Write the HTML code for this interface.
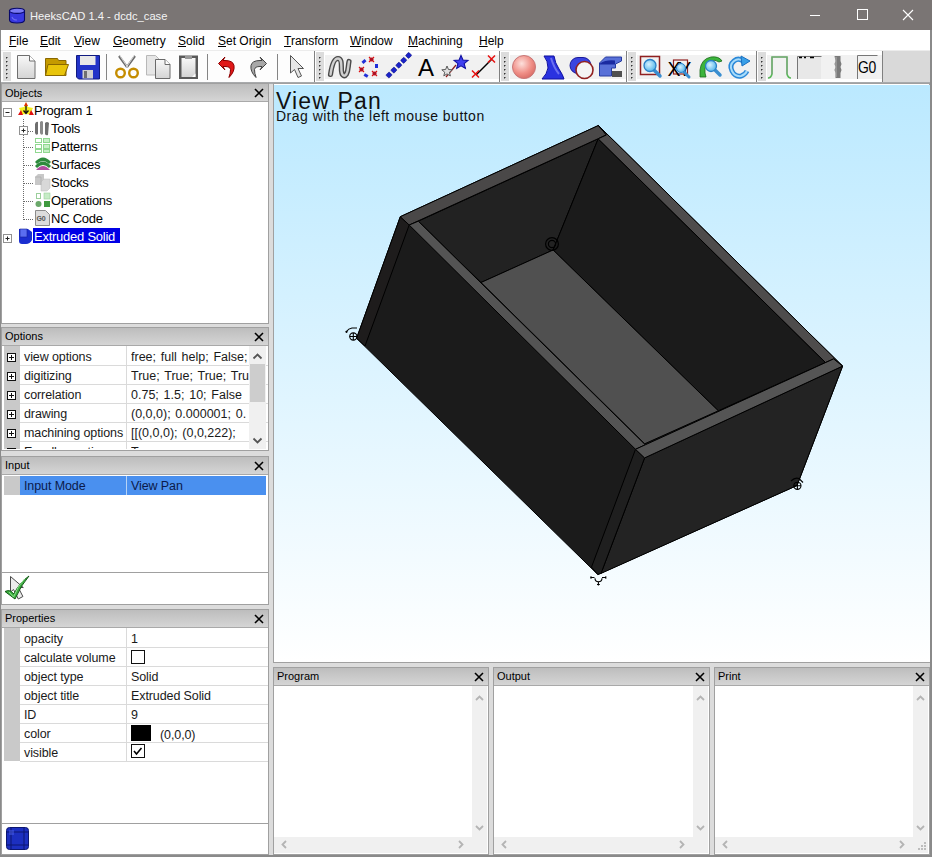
<!DOCTYPE html>
<html><head><meta charset="utf-8">
<style>
*{margin:0;padding:0;box-sizing:border-box}
html,body{width:932px;height:857px;overflow:hidden;background:#dcdcdc;font-family:"Liberation Sans",sans-serif;position:relative}
.a{position:absolute}
#title{left:0;top:0;width:932px;height:30px;background:#7a7574;color:#fff}
#menu{left:0;top:30px;width:932px;height:20px;background:#fff;font-size:12px;color:#000}
#menu span{position:absolute;top:4px;white-space:pre}
#menu u{text-decoration:underline;text-decoration-thickness:1px;text-underline-offset:0.5px}
.fr{position:absolute;border:1px solid #a0a0a0;background:#fff}
.hdr{position:absolute;height:18px;background:linear-gradient(#bdbdbd,#d5d5d5);border-bottom:1px solid #a9a9a9;font-size:11px;color:#000}
.hdr span{position:absolute;left:3px;top:2px}
.hdr.o span{top:3px}
.hx{position:absolute;right:4px;top:4px;width:10px;height:10px}
.grid{position:absolute;font-size:12.5px;letter-spacing:-0.1px;color:#1a1a1a;overflow:hidden;background:#fff}
.grid .g{position:absolute;left:2px;top:0;width:16px;background:#c9c9c9}
.grid .row{position:absolute;left:18px;height:19px;width:248px;border-bottom:1px solid #dadada}
.grid .row span{position:absolute;top:3px;white-space:pre}
.grid .c{position:absolute;top:0;width:1px;background:#dadada}
.pb{position:absolute;left:5px;width:9px;height:9px;border:1px solid #111;background:#fff}
.pb:before{content:"";position:absolute;left:1px;top:3px;width:5px;height:1px;background:#111}
.pb:after{content:"";position:absolute;left:3px;top:1px;width:1px;height:5px;background:#111}
</style></head><body>
<!-- title bar -->
<div id="title" class="a">
  <svg class="a" style="left:8px;top:6px" width="18" height="18" viewBox="0 0 18 18">
    <path d="M1.5 4.5v9.5q0 3 7.5 3q7.5 0 7.5-3v-9.5z" fill="#3838e0" stroke="#08086a" stroke-width="1.1"/>
    <ellipse cx="9" cy="4.8" rx="7.5" ry="2.6" fill="#7a7af4" stroke="#08086a" stroke-width="1.1"/>
    <path d="M4 11q1 3 5 3" stroke="#6a6af0" stroke-width="1.2" fill="none"/>
  </svg>
  <span class="a" style="left:30px;top:10px;font-size:11.2px;color:#f4f4f4">HeeksCAD 1.4 - dcdc_case</span>
  <svg class="a" style="left:700px;top:0" width="232" height="30">
    <path d="M110 15.5h10" stroke="#fff" stroke-width="1"/>
    <rect x="857.5" y="9.5" width="10" height="10" fill="none" stroke="#fff" stroke-width="1" transform="translate(-700 0)"/>
    <path d="M203 10l10 10M213 10l-10 10" stroke="#fff" stroke-width="1.1"/>
  </svg>
</div>
<div id="menu" class="a">
  <span style="left:9px"><u>F</u>ile</span>
  <span style="left:40px"><u>E</u>dit</span>
  <span style="left:74px"><u>V</u>iew</span>
  <span style="left:113px"><u>G</u>eometry</span>
  <span style="left:178px"><u>S</u>olid</span>
  <span style="left:218px"><u>S</u>et Origin</span>
  <span style="left:284px"><u>T</u>ransform</span>
  <span style="left:350px"><u>W</u>indow</span>
  <span style="left:408px"><u>M</u>achining</span>
  <span style="left:479px"><u>H</u>elp</span>
</div>
<!-- toolbar -->
<svg class="a" style="left:0;top:50px" width="932" height="34" viewBox="0 50 932 34">
 <defs>
  <linearGradient id="gdoc" x1="0" y1="0" x2="0" y2="1"><stop offset="0" stop-color="#f8f8f8"/><stop offset="1" stop-color="#d4d4d4"/></linearGradient>
  <radialGradient id="gsph" cx="0.4" cy="0.35" r="0.7"><stop offset="0" stop-color="#fde0dc"/><stop offset="0.6" stop-color="#f09088"/><stop offset="1" stop-color="#d86a64"/></radialGradient>
  <radialGradient id="gmag" cx="0.4" cy="0.4" r="0.6"><stop offset="0" stop-color="#d8f2ff"/><stop offset="1" stop-color="#58b8ec"/></radialGradient>
 </defs>
 <rect x="0" y="50" width="932" height="34" fill="#d9d9d9"/>
 <rect x="1" y="50" width="930" height="1" fill="#ececec"/>
 <rect x="1" y="51" width="313" height="31" fill="#fdfdfd"/>
 <rect x="315" y="51" width="185" height="31" fill="#fff"/><rect x="325" y="55" width="175" height="24" fill="#f1f1f1"/>
 <rect x="500" y="51" width="127" height="31" fill="#fff"/><rect x="510" y="55" width="117" height="24" fill="#f1f1f1"/>
 <rect x="627" y="51" width="130" height="31" fill="#fff"/><rect x="637" y="55" width="120" height="24" fill="#f1f1f1"/>
 <rect x="757" y="51" width="126" height="31" fill="#fff"/><rect x="767" y="55" width="116" height="24" fill="#f1f1f1"/>
 <g fill="#808080"><rect x="314" y="51" width="1" height="32"/><rect x="499" y="51" width="1" height="32"/><rect x="626" y="51" width="1" height="32"/><rect x="756" y="51" width="1" height="32"/><rect x="882" y="51" width="1" height="32"/></g>
 <rect x="0" y="82" width="932" height="2" fill="#a8aaac"/>
 <!-- grippers -->
 <g fill="#dcdcdc"><rect x="3" y="52" width="8" height="29"/><rect x="316" y="52" width="8" height="29"/><rect x="501" y="52" width="8" height="29"/><rect x="628" y="52" width="8" height="29"/><rect x="758" y="52" width="8" height="29"/></g>
 <g fill="#333">
  <path id="gd" d="M6 57h2l-2 2zM6 61h2l-2 2zM6 65h2l-2 2zM6 69h2l-2 2zM6 73h2l-2 2zM6 77h2l-2 2z"/>
  <use href="#gd" x="313"/><use href="#gd" x="498"/><use href="#gd" x="625"/><use href="#gd" x="755"/>
 </g>
 <!-- separators -->
 <g fill="#858585"><rect x="106" y="54" width="1" height="26"/><rect x="207" y="54" width="1" height="26"/><rect x="277" y="54" width="1" height="26"/></g>
 <!-- new doc -->
 <path d="M17.5 55.5h12l5.5 5.5v17.5h-17.5z" fill="url(#gdoc)" stroke="#6e6e6e"/><path d="M29.5 55.5v5.5h5.5" fill="#fff" stroke="#6e6e6e"/>
 <!-- folder -->
 <path d="M45.5 58.5h12l1 2h7.5v15h-20.5z" fill="#c49a00" stroke="#8a6800"/>
 <path d="M48 64.5h20.5l-4 11h-19z" fill="#e8c40a" stroke="#8a6800"/>
 <!-- floppy -->
 <path d="M76.5 55.5h23v23.5h-21l-2-2z" fill="#2233c8" stroke="#101a80"/>
 <rect x="80" y="56" width="15.5" height="9" fill="#e8e8e8"/>
 <rect x="82.5" y="70" width="10.5" height="8.5" fill="#d0d0d0"/><rect x="84" y="71" width="3" height="7" fill="#707070"/>
 <!-- scissors -->
 <path d="M119 56l8 11M135 56l-8 11" stroke="#6a6a6a" stroke-width="2.2" fill="none"/>
 <path d="M120 56l7.5 11M134 56l-7.5 11" stroke="#f0f0f0" stroke-width="0.8" fill="none"/>
 <circle cx="120.5" cy="73" r="4.3" fill="none" stroke="#c48c00" stroke-width="2.4"/><circle cx="133.5" cy="73" r="4.3" fill="none" stroke="#c48c00" stroke-width="2.4"/>
 <!-- copy -->
 <path d="M146.5 55.5h9l4 4v15.5h-13z" fill="#e6e6e6" stroke="#b8b8b8"/>
 <path d="M155.5 59.5h9.5l5 5v14h-14.5z" fill="url(#gdoc)" stroke="#6a6a6a"/><path d="M165 59.5v5h5" fill="#fff" stroke="#6a6a6a"/>
 <!-- paste -->
 <rect x="179" y="55.5" width="19" height="23.5" fill="#5a5a5a"/><rect x="181.5" y="58" width="14" height="19" fill="url(#gdoc)"/><rect x="185" y="56" width="7" height="3" fill="#999"/>
 <path d="M192 77l3.5-3.5v3.5z" fill="#fff"/>
 <!-- undo -->
 <path d="M229 77.5q6-6 5-12q-1-5-9-5h-2l2-3.5-6.5 6.5 6.5 6.5-2-3.5h2q5 0 5.5 3q0 4-1.5 7.5z" fill="#e01818" stroke="#8a0000" stroke-width="1"/>
 <!-- redo -->
 <path d="M256 77.5q-6-6-5-12q1-5 9-5h2l-2-3.5 6.5 6.5-6.5 6.5 2-3.5h-2q-5 0-5.5 3q0 4 1.5 7.5z" fill="#a8a8a8" stroke="#444" stroke-width="1"/>
 <!-- select arrow -->
 <path d="M290.5 55.5v17.5l4-3.5 3.5 8 3.5-1.5-3.5-7.5h5.5z" fill="#e6e6e6" stroke="#555" stroke-width="1"/>
 <!-- spline -->
 <path d="M330.5 74.5C332 64 334.5 58.5 338 58.5C342.5 58.5 341 67 341.5 71C342 76 344.5 77 346.5 74C348.5 70.5 348 66 349 61.5" fill="none" stroke="#4a4a4a" stroke-width="5.2" stroke-linecap="round" stroke-linejoin="round"/>
 <path d="M330.5 74.5C332 64 334.5 58.5 338 58.5C342.5 58.5 341 67 341.5 71C342 76 344.5 77 346.5 74C348.5 70.5 348 66 349 61.5" fill="none" stroke="#d0d0d0" stroke-width="2.4" stroke-linecap="round" stroke-linejoin="round"/>
 <!-- circle dots -->
 <g fill="#2030d8"><rect x="362" y="60" width="4" height="3" transform="rotate(-40 364 61.5)"/><rect x="375" y="64" width="3" height="4"/><rect x="364" y="74" width="4" height="3" transform="rotate(30 366 75.5)"/></g>
 <g stroke="#e01010" stroke-width="1.2"><path d="M369 57l5 5M374 57l-5 5M359 67l5 5M364 67l-5 5M372 71l5 5M377 71l-5 5"/></g>
 <g fill="#b01020"><circle cx="371.5" cy="59.5" r="2"/><circle cx="361.5" cy="69.5" r="2"/><circle cx="374.5" cy="73.5" r="2"/></g>
 <!-- dashed line -->
 <g fill="#1a22c8" stroke="#10168a" stroke-width="0.6"><rect x="386.7" y="72.8" width="4.6" height="4.4" rx="0.8" transform="rotate(-45 389.0 75.0)"/><rect x="391.6" y="67.9" width="4.6" height="4.4" rx="0.8" transform="rotate(-45 393.9 70.1)"/><rect x="396.5" y="63.0" width="4.6" height="4.4" rx="0.8" transform="rotate(-45 398.8 65.2)"/><rect x="401.4" y="58.1" width="4.6" height="4.4" rx="0.8" transform="rotate(-45 403.7 60.3)"/><rect x="406.3" y="53.2" width="4.6" height="4.4" rx="0.8" transform="rotate(-45 408.6 55.4)"/></g>
 <!-- A -->
 <text x="418" y="75.5" font-family="Liberation Sans" font-size="24" fill="#000">A</text>
 <!-- star -->
 <path d="M446 77l10-12" stroke="#8a1a1a" stroke-width="1.2"/>
 <path d="M447 66l1.5 3.5 3.8.3-2.9 2.4 1 3.7-3.4-2-3.2 2 0.9-3.7-2.9-2.4 3.8-.3z" fill="#e0e0e0" stroke="#5a5a5a" stroke-width="1"/>
 <path d="M461 55.5l2 4.5 5 .4-3.8 3.2 1.2 4.8-4.4-2.6-4.3 2.6 1.2-4.8-3.8-3.2 5-.4z" fill="#4040f0" stroke="#1010a0" stroke-width="1.1"/>
 <!-- red x line -->
 <path d="M476 75l16-16" stroke="#000" stroke-width="1.5"/>
 <path d="M472 70.5l7 7M479 70.5l-7 7M488 55.5l7 7M495 55.5l-7 7" stroke="#e81010" stroke-width="1.5"/>
 <!-- sphere -->
 <circle cx="524" cy="67" r="11.5" fill="url(#gsph)" stroke="#c87878" stroke-width="1"/>
 <!-- cone -->
 <path d="M544 56h10q1 7 5 13q4 6 5 10h-22q5-5 6-11q0-7-4-12z" fill="#2a32e0" stroke="#1010a0" stroke-width="1"/>
 <path d="M551 58q3 10 8 16" stroke="#6c70f0" stroke-width="2" fill="none"/>
 <!-- cylinder -->
 <path d="M578 57.5h5a8 8 0 0 1 0 16h-5a8 8 0 0 1 0-16z" fill="#3a44e0" stroke="#1a1a9a" stroke-width="1"/>
 <circle cx="584.5" cy="70" r="8.5" fill="#f4f4f4" stroke="#902020" stroke-width="1.6"/>
 <!-- block -->
 <path d="M599.5 63l6-6h16v4l-6 3v4h-4v8h-12z" fill="#5870d8" stroke="#283ca0" stroke-width="1"/>
 <path d="M600 63.5q6-4 15-3v4h-15z" fill="#1a2aa0"/><rect x="612" y="71" width="10" height="6" fill="#505050"/>
 <!-- zoom window -->
 <rect x="640.5" y="56.5" width="19" height="18" fill="none" stroke="#902020" stroke-width="1.5"/>
 <path d="M654 70l6 6" stroke="#3a8ed0" stroke-width="3.5" stroke-linecap="round"/>
 <circle cx="650" cy="65.5" r="6" fill="url(#gmag)" stroke="#2a80c8" stroke-width="1.3"/>
 <!-- XY -->
 <rect x="673.5" y="60" width="14" height="14" fill="none" stroke="#902020" stroke-width="1.2"/>
 <text x="667.5" y="76" font-family="Liberation Sans" font-size="19.5" fill="#000" letter-spacing="-2.2">XY</text>
 <path d="M684 72l5 5" stroke="#3a8ed0" stroke-width="3" stroke-linecap="round"/>
 <circle cx="681" cy="68" r="4.5" fill="url(#gmag)" stroke="#2a80c8" stroke-width="1"/>
 <!-- green arc zoom -->
 <path d="M700 77v-7q1-11 11-13q8-1 11 4l-3 1q-4-3-8-1q-7 3-6 12l1 4z" fill="#3cb43c" stroke="#1a6a1a" stroke-width="0.8"/>
 <path d="M715 70l5 5" stroke="#3a8ed0" stroke-width="3.5" stroke-linecap="round"/>
 <circle cx="711" cy="66" r="5.5" fill="url(#gmag)" stroke="#2a80c8" stroke-width="1.3"/>
 <!-- rotate -->
 <path d="M744 62q-5-5-10-1q-5 4-2 10q3 6 9 5q4-1 6-5" fill="none" stroke="#2a88d8" stroke-width="5"/>
 <path d="M744 62q-5-5-10-1q-5 4-2 10q3 6 9 5q4-1 6-5" fill="none" stroke="#a8dcfa" stroke-width="2"/>
 <path d="M741 56l9 5-8 5z" fill="#3aa0e8" stroke="#1a70c0" stroke-width="1"/>
 <!-- pulse -->
 <path d="M768 78q3 0 4-4v-17h15v17q1 4 4 4" fill="none" stroke="#5ab85a" stroke-width="1.6"/>
 <path d="M772 74v-17h15v17" fill="none" stroke="#8a8a8a" stroke-width="0.6"/>
 <!-- dotted rect -->
 <rect x="797" y="56" width="24" height="23" fill="#e8e8e8"/>
 <path d="M797.5 79v-22.5h24" fill="none" stroke="#777" stroke-width="1"/>
 <path d="M799 57.5h3M804 57.5h2M810 57.5h4" stroke="#000" stroke-width="1.5"/>
 <!-- tool bit -->
 <path d="M834.5 56h6v5l1 3-1 3 1 3-1 3v5h-5v-5l-1-3 1-3-1-3 1-3z" fill="#7a7a7a"/>
 <path d="M836 57v20" stroke="#b0b0b0" stroke-width="1"/>
 <!-- G0 -->
 <rect x="857" y="55" width="20" height="24" fill="#f0f0f0"/>
 <path d="M857.5 79v-23.5h20" fill="none" stroke="#777" stroke-width="1"/>
 <text x="0" y="0" font-family="Liberation Sans" font-size="17" fill="#000" letter-spacing="-0.5" transform="translate(858 73.3) scale(0.82 1)">G0</text>
</svg>


<div class="a" style="left:0;top:30px;width:1px;height:827px;background:#8a8a8a"></div>
<div class="a" style="left:930px;top:30px;width:2px;height:827px;background:#8a8a8a"></div>
<div class="a" style="left:0;top:855px;width:932px;height:2px;background:#8a8a8a"></div>
<div class="fr" style="left:1px;top:83px;width:268px;height:241px"></div>
<div class="hdr o" style="left:2px;top:84px;width:266px"><span>Objects</span><svg class="hx" viewBox="0 0 10 10"><path d="M1 1l8 8M9 1l-8 8" stroke="#000" stroke-width="1.6"/></svg></div>
<div class="a" style="left:2px;top:102px;width:266px;height:220px;overflow:hidden;font-size:13px;letter-spacing:-0.25px;color:#000" id="tree">
 <svg class="a" style="left:0;top:0" width="266" height="220">
  <g stroke="#6a6a6a" stroke-dasharray="1 1" stroke-width="1">
   <path d="M21.5 17v102M22 29.5h10M22 45.5h10M22 63.5h10M22 81.5h10M22 99.5h10M22 117.5h10"/>
  </g>
  <g fill="#fff" stroke="#919191"><rect x="1.5" y="6.5" width="8" height="8"/><rect x="17.5" y="24.5" width="8" height="8"/><rect x="1.5" y="132.5" width="8" height="8"/></g>
  <g stroke="#222" stroke-width="1"><path d="M3.5 10.5h4M19.5 28.5h4M21.5 26.5v4M3.5 136.5h4M5.5 134.5v4"/></g>
  <!-- program icon -->
  <g transform="translate(16,0)">
   <polygon points="8,1 10,5 15,6 13,10 15,13 8,12 1,13 3,10 1,6 6,5" fill="#f4f020"/>
   <polygon points="8,0 6,4 10,4" fill="#e03000"/>
   <polygon points="0,13 3,8 5,13" fill="#e01010"/><polygon points="11,13 13,8 16,13" fill="#e01010"/>
   <path d="M8 4v7M5.5 8.5l2.5 3 2.5-3" stroke="#111" stroke-width="1.3" fill="none"/>
  </g>
  <!-- tools icon -->
  <g transform="translate(32,18)" fill="#6e6e6e">
   <path d="M1 4q1-3 3-2l0 12q-2 2-3-1z"/><path d="M6 2q2-2 3 0l0 12q-2 2-3-1z" fill="#8a8a8a"/><path d="M11 3q2-2 4 0l-1 12q-2 1-3-1z"/>
  </g>
  <!-- patterns -->
  <g transform="translate(33,36)" fill="none" stroke="#90d890">
   <rect x="0.5" y="0.5" width="6" height="4"/><rect x="0.5" y="6.5" width="6" height="4"/><rect x="0.5" y="11.5" width="6" height="3"/>
   <rect x="8.5" y="0.5" width="6" height="4" fill="#c8f0c8"/><rect x="8.5" y="6.5" width="6" height="4" fill="#c8f0c8"/><rect x="8.5" y="11.5" width="6" height="3" fill="#c8f0c8"/>
  </g>
  <!-- surfaces -->
  <g transform="translate(33,54)">
   <path d="M1 14q7-8 14 0z" fill="#b04fa0"/><path d="M0 10q8-9 16 0l-2 2q-6-6-12 0z" fill="#2d8a3d"/><path d="M0 6q8-9 16 0l-2 2q-6-6-12 0z" fill="#2d8a3d"/>
  </g>
  <!-- stocks -->
  <g transform="translate(33,72)">
   <path d="M0 3l3-3h6v8l-3 3h-6z" fill="#c8c8c8"/><path d="M6 8l3-3h6v9l-3 3h-6z" fill="#d8d8d8" stroke="#bbb" stroke-width=".5"/><path d="M0 3h6v8" fill="none" stroke="#aaa" stroke-width=".6"/>
  </g>
  <!-- operations -->
  <g transform="translate(33,90)">
   <rect x="1.5" y="1.5" width="4" height="5" fill="none" stroke="#9bcf9b"/><rect x="9" y="1" width="6" height="6" fill="#c6ecc6" stroke="#9bcf9b" stroke-width=".6"/>
   <circle cx="3.5" cy="12" r="3" fill="#6aa86a"/><rect x="9" y="9" width="6" height="6" fill="#3f9a3f"/>
  </g>
  <!-- nc code -->
  <g transform="translate(33,108)">
   <path d="M0.5 0.5h10l4 4v11h-14z" fill="#dcdcdc" stroke="#8c8c8c"/><text x="1.5" y="11" font-size="7" font-weight="bold" fill="#555" font-family="Liberation Sans">G0</text>
  </g>
  <!-- extruded solid -->
  <rect x="31" y="126" width="87" height="15" fill="#0000e6"/>
  <g transform="translate(16,126)">
   <path d="M1 1h9l4 3v8q-2 4-6 4h-4q-3 0-3-3z" fill="#1a2ed0"/><rect x="2" y="1" width="7" height="8" fill="#5a6ef0" stroke="#14209a" stroke-width=".6"/>
  </g>
 </svg>
 <span class="a" style="left:32px;top:1px">Program 1</span>
 <span class="a" style="left:49px;top:19px">Tools</span>
 <span class="a" style="left:49px;top:37px">Patterns</span>
 <span class="a" style="left:49px;top:55px">Surfaces</span>
 <span class="a" style="left:49px;top:73px">Stocks</span>
 <span class="a" style="left:49px;top:91px">Operations</span>
 <span class="a" style="left:49px;top:109px">NC Code</span>
 <span class="a" style="left:32px;top:127px;color:#fff">Extruded Solid</span>
</div>

<div class="fr" style="left:1px;top:327px;width:268px;height:124px"></div>
<div class="hdr " style="left:2px;top:328px;width:266px"><span>Options</span><svg class="hx" viewBox="0 0 10 10"><path d="M1 1l8 8M9 1l-8 8" stroke="#000" stroke-width="1.6"/></svg></div>
<div class="grid" style="left:2px;top:346px;width:266px;height:103px">
 <div class="g" style="height:104px;top:0"></div>
 <div class="pb" style="top:7px"></div>
 <div class="row" style="top:1px"><span style="left:4px">view options</span><span style="left:111px;width:119px;overflow:hidden;letter-spacing:0;word-spacing:1.3px">free; full help; False; F</span></div>
 <div class="pb" style="top:26px"></div>
 <div class="row" style="top:20px"><span style="left:4px">digitizing</span><span style="left:111px;width:119px;overflow:hidden;letter-spacing:0;word-spacing:1.3px">True; True; True; Tru</span></div>
 <div class="pb" style="top:45px"></div>
 <div class="row" style="top:39px"><span style="left:4px">correlation</span><span style="left:111px;width:119px;overflow:hidden;letter-spacing:0;word-spacing:1.3px">0.75; 1.5; 10; False</span></div>
 <div class="pb" style="top:64px"></div>
 <div class="row" style="top:58px"><span style="left:4px">drawing</span><span style="left:111px;width:119px;overflow:hidden;letter-spacing:0;word-spacing:1.3px">(0,0,0); 0.000001; 0.</span></div>
 <div class="pb" style="top:83px"></div>
 <div class="row" style="top:77px"><span style="left:4px">machining options</span><span style="left:111px;width:119px;overflow:hidden;letter-spacing:0;word-spacing:1.3px">[[(0,0,0); (0,0,222);</span></div>
 <div class="pb" style="top:102px"></div>
 <div class="row" style="top:96px"><span style="left:4px">Excellon options</span><span style="left:111px;width:119px;overflow:hidden;letter-spacing:0;word-spacing:1.3px">True</span></div>
 <div class="c" style="left:124px;height:104px"></div>
 <div class="a" style="left:247px;top:0;width:17px;height:104px;background:#f0f0f0"></div>
 <div class="a" style="left:248px;top:18px;width:15px;height:38px;background:#cdcdcd"></div>
 <svg class="a" style="left:247px;top:0" width="17" height="104"><path d="M4.5 12.5l4-4 4 4M4.5 92.5l4 4 4-4" fill="none" stroke="#555" stroke-width="1.8"/></svg>
</div>
<div class="fr" style="left:1px;top:456px;width:268px;height:149px"></div>
<div class="hdr " style="left:2px;top:457px;width:266px"><span>Input</span><svg class="hx" viewBox="0 0 10 10"><path d="M1 1l8 8M9 1l-8 8" stroke="#000" stroke-width="1.6"/></svg></div>
<div class="grid" style="left:2px;top:475px;width:266px;height:129px">
 <div class="g" style="top:1px;height:19px"></div>
 <div class="a" style="left:18px;top:1px;width:246px;height:19px;background:#4a90ef"></div>
 <div class="c" style="left:124px;top:1px;height:19px;background:#b6d3f6"></div>
 <span class="a" style="left:22px;top:4px;color:#0b1a4a">Input Mode</span>
 <span class="a" style="left:129px;top:4px;color:#0b1a4a">View Pan</span>
 <div class="a" style="left:0;top:97px;width:266px;height:1px;background:#a0a0a0"></div>
 <svg class="a" style="left:0;top:98px" width="30" height="31" viewBox="2 573 30 31">
  <path d="M10.5 576.5v15.5l3-2.5 4.8 9.5 4.6-2.5-4.6-9h5z" fill="#ececec" stroke="#4a4a4a" stroke-width="1"/>
  <path d="M5 591.5q3-1.5 5.5-0.5l3.5 3q5-11 15-18q-8 9-14 23z" fill="#3cb040" stroke="#0f5a12" stroke-width="1" stroke-linejoin="round"/>
  <path d="M9 592l4.5 5q4-11 11-18" fill="none" stroke="#8ee08e" stroke-width="1"/>
 </svg>
</div>
<div class="fr" style="left:1px;top:609px;width:268px;height:246px"></div>
<div class="hdr " style="left:2px;top:610px;width:266px"><span>Properties</span><svg class="hx" viewBox="0 0 10 10"><path d="M1 1l8 8M9 1l-8 8" stroke="#000" stroke-width="1.6"/></svg></div>
<div class="grid" style="left:2px;top:628px;width:266px;height:226px">
 <div class="g" style="top:0;height:133px"></div>
 <div class="row" style="top:1px"><span style="left:4px">opacity</span><span style="left:111px">1</span></div>
 <div class="row" style="top:20px"><span style="left:4px">calculate volume</span><span style="left:111px"></span></div>
 <div class="row" style="top:39px"><span style="left:4px">object type</span><span style="left:111px">Solid</span></div>
 <div class="row" style="top:58px"><span style="left:4px">object title</span><span style="left:111px">Extruded Solid</span></div>
 <div class="row" style="top:77px"><span style="left:4px">ID</span><span style="left:111px">9</span></div>
 <div class="row" style="top:96px"><span style="left:4px">color</span><span style="left:111px"></span></div>
 <div class="row" style="top:115px"><span style="left:4px">visible</span><span style="left:111px"></span></div>
 <div class="c" style="left:124px;top:0;height:133px"></div>
 <div class="a" style="left:129px;top:22px;width:14px;height:14px;border:1px solid #111;background:#fff"></div>
 <div class="a" style="left:129px;top:97px;width:20px;height:16px;background:#000"></div>
 <span class="a" style="left:158px;top:100px">(0,0,0)</span>
 <div class="a" style="left:129px;top:116px;width:14px;height:14px;border:1px solid #111;background:#fff"></div>
 <svg class="a" style="left:129px;top:116px" width="14" height="14"><path d="M3 7l2.5 3 5-6" fill="none" stroke="#000" stroke-width="1.6"/></svg>
 <div class="a" style="left:0;top:195px;width:266px;height:1px;background:#a0a0a0"></div>
 <svg class="a" style="left:4px;top:199px" width="23" height="23" viewBox="0 0 23 23">
  <rect x="0.5" y="0.5" width="22" height="22" rx="3" fill="#1c2fc0" stroke="#0c1670"/>
  <path d="M5 1v21M18 1v21M1 5h21M1 18h21" stroke="#0c1670" stroke-width="1"/>
  <rect x="3" y="3" width="5" height="5" fill="#4a60e8" opacity=".5"/>
 </svg>
</div>
<div class="fr" style="left:273px;top:83px;width:657px;height:580px"></div>
<!-- 3D view -->
<svg class="a" style="left:274px;top:85px" width="656" height="577" viewBox="274 85 656 577">
 <defs><linearGradient id="bg" x1="0" y1="0" x2="0" y2="1"><stop offset="0" stop-color="#bbe9ff"/><stop offset="1" stop-color="#ffffff"/></linearGradient></defs>
 <rect x="274" y="85" width="657" height="577" fill="url(#bg)"/>
 <g stroke="#000" stroke-width="1" stroke-linejoin="round">
  <polygon points="400.3,216.7 598.4,125.5 842.6,366.1 797.0,485.5 597.8,574.5 356.6,338.3" fill="#1b1b1b"/>
  <polygon points="400.3,216.7 409.2,225.0 365.0,346.0 356.6,338.3" fill="#1e1c1c"/>
  <polygon points="644.6,457.9 842.6,366.1 797.0,485.5 601.0,573.4" fill="#232323"/>
  <polygon points="635.5,449.3 644.6,457.9 601.0,573.4 597.8,574.5 591.5,567.1" fill="#1f1f1f"/>
  <polygon points="418.3,221.2 598.2,138.8 553.1,250.0 481.0,282.5" fill="#222222"/>
  <polygon points="598.2,138.8 825.5,362.5 718.3,410.8 553.1,250.0" fill="#1b1b1b"/>
  <polygon points="553.1,250.0 718.3,410.8 644.7,443.8 481.0,282.5" fill="#505050"/>
  <polygon points="400.3,216.7 598.4,125.5 606.4,134.9 409.2,225.0" fill="#4a4848"/>
  <polygon points="598.4,125.5 842.6,366.1 833.6,358.9 825.5,362.5 598.2,138.8 606.4,134.9" fill="#4e4c4c"/>
  <polygon points="409.2,225.0 418.3,221.2 645.3,444.8 635.5,449.3" fill="#545454"/>
  <polygon points="635.5,449.3 645.3,444.8 833.6,358.9 842.6,366.1 644.6,457.9" fill="#555555"/>
 </g>
 <g fill="none" stroke="#000" stroke-width="1.1">
  <circle cx="353.3" cy="336.5" r="3.6"/><path d="M349.7 336.5h7.2M353.3 333v7"/><path d="M346.5 331.5q2-3 5.5-3.5h5"/><circle cx="346.5" cy="331.8" r="0.6" fill="#000"/>
  <circle cx="552" cy="244" r="6.4" stroke="#000" stroke-width="1.2"/><circle cx="552" cy="244" r="3.6" stroke="#000" stroke-width="1.2"/>
  <path d="M595 578.2a3.5 3.5 0 0 0 7 0M594.5 577.5h-4M602 577.5h4M598.4 581.5v4"/><path d="M591 576.2v2.6M605.8 576.2v2.6M597 584.5h2.8"/>
  <circle cx="797.4" cy="485.8" r="3.6"/><path d="M793.8 485.8h7.2M797.4 482.2v7.2"/><path d="M791 481q4-4 8-2.5l4 4"/>
 </g>
</svg>
<div class="a" style="left:276px;top:89px;font-size:23px;letter-spacing:1.15px;color:#111;line-height:24px">View Pan</div>
<div class="a" style="left:276px;top:108px;font-size:14px;letter-spacing:0.48px;color:#111;line-height:16px">Drag with the left mouse button</div>


<div class="fr" style="left:273px;top:667px;width:216px;height:188px"></div>
<div class="hdr " style="left:274px;top:668px;width:214px"><span>Program</span><svg class="hx" viewBox="0 0 10 10"><path d="M1 1l8 8M9 1l-8 8" stroke="#000" stroke-width="1.6"/></svg></div>
<div class="a" style="left:472px;top:686px;width:15px;height:166px;background:#f0f0f0"></div>
<div class="a" style="left:274px;top:837px;width:213px;height:16px;background:#f0f0f0"></div>
<svg class="a" style="left:274px;top:686px" width="214" height="168"><g fill="none" stroke="#b4b4b4" stroke-width="1.8"><path d="M202 14l3.5-3.5 3.5 3.5M202 140l3.5 3.5 3.5-3.5M12 155l-3.5 3.5 3.5 3.5M185 155l3.5 3.5-3.5 3.5"/></g></svg>
<div class="fr" style="left:493px;top:667px;width:217px;height:188px"></div>
<div class="hdr " style="left:494px;top:668px;width:215px"><span>Output</span><svg class="hx" viewBox="0 0 10 10"><path d="M1 1l8 8M9 1l-8 8" stroke="#000" stroke-width="1.6"/></svg></div>
<div class="a" style="left:693px;top:686px;width:15px;height:166px;background:#f0f0f0"></div>
<div class="a" style="left:494px;top:837px;width:214px;height:16px;background:#f0f0f0"></div>
<svg class="a" style="left:494px;top:686px" width="215" height="168"><g fill="none" stroke="#b4b4b4" stroke-width="1.8"><path d="M203 14l3.5-3.5 3.5 3.5M203 140l3.5 3.5 3.5-3.5M12 155l-3.5 3.5 3.5 3.5M186 155l3.5 3.5-3.5 3.5"/></g></svg>
<div class="fr" style="left:714px;top:667px;width:216px;height:188px"></div>
<div class="hdr " style="left:715px;top:668px;width:214px"><span>Print</span><svg class="hx" viewBox="0 0 10 10"><path d="M1 1l8 8M9 1l-8 8" stroke="#000" stroke-width="1.6"/></svg></div>
<div class="a" style="left:913px;top:686px;width:15px;height:166px;background:#f0f0f0"></div>
<div class="a" style="left:715px;top:837px;width:213px;height:16px;background:#f0f0f0"></div>
<svg class="a" style="left:715px;top:686px" width="214" height="168"><g fill="none" stroke="#b4b4b4" stroke-width="1.8"><path d="M202 14l3.5-3.5 3.5 3.5M202 140l3.5 3.5 3.5-3.5M12 155l-3.5 3.5 3.5 3.5M185 155l3.5 3.5-3.5 3.5"/></g></svg>
<svg class="a" style="left:912px;top:838px" width="16" height="15"><g fill="#bdbdbd"><rect x="12" y="4" width="2" height="2"/><rect x="9" y="7" width="2" height="2"/><rect x="12" y="7" width="2" height="2"/><rect x="6" y="10" width="2" height="2"/><rect x="9" y="10" width="2" height="2"/><rect x="12" y="10" width="2" height="2"/></g></svg>
</body></html>
